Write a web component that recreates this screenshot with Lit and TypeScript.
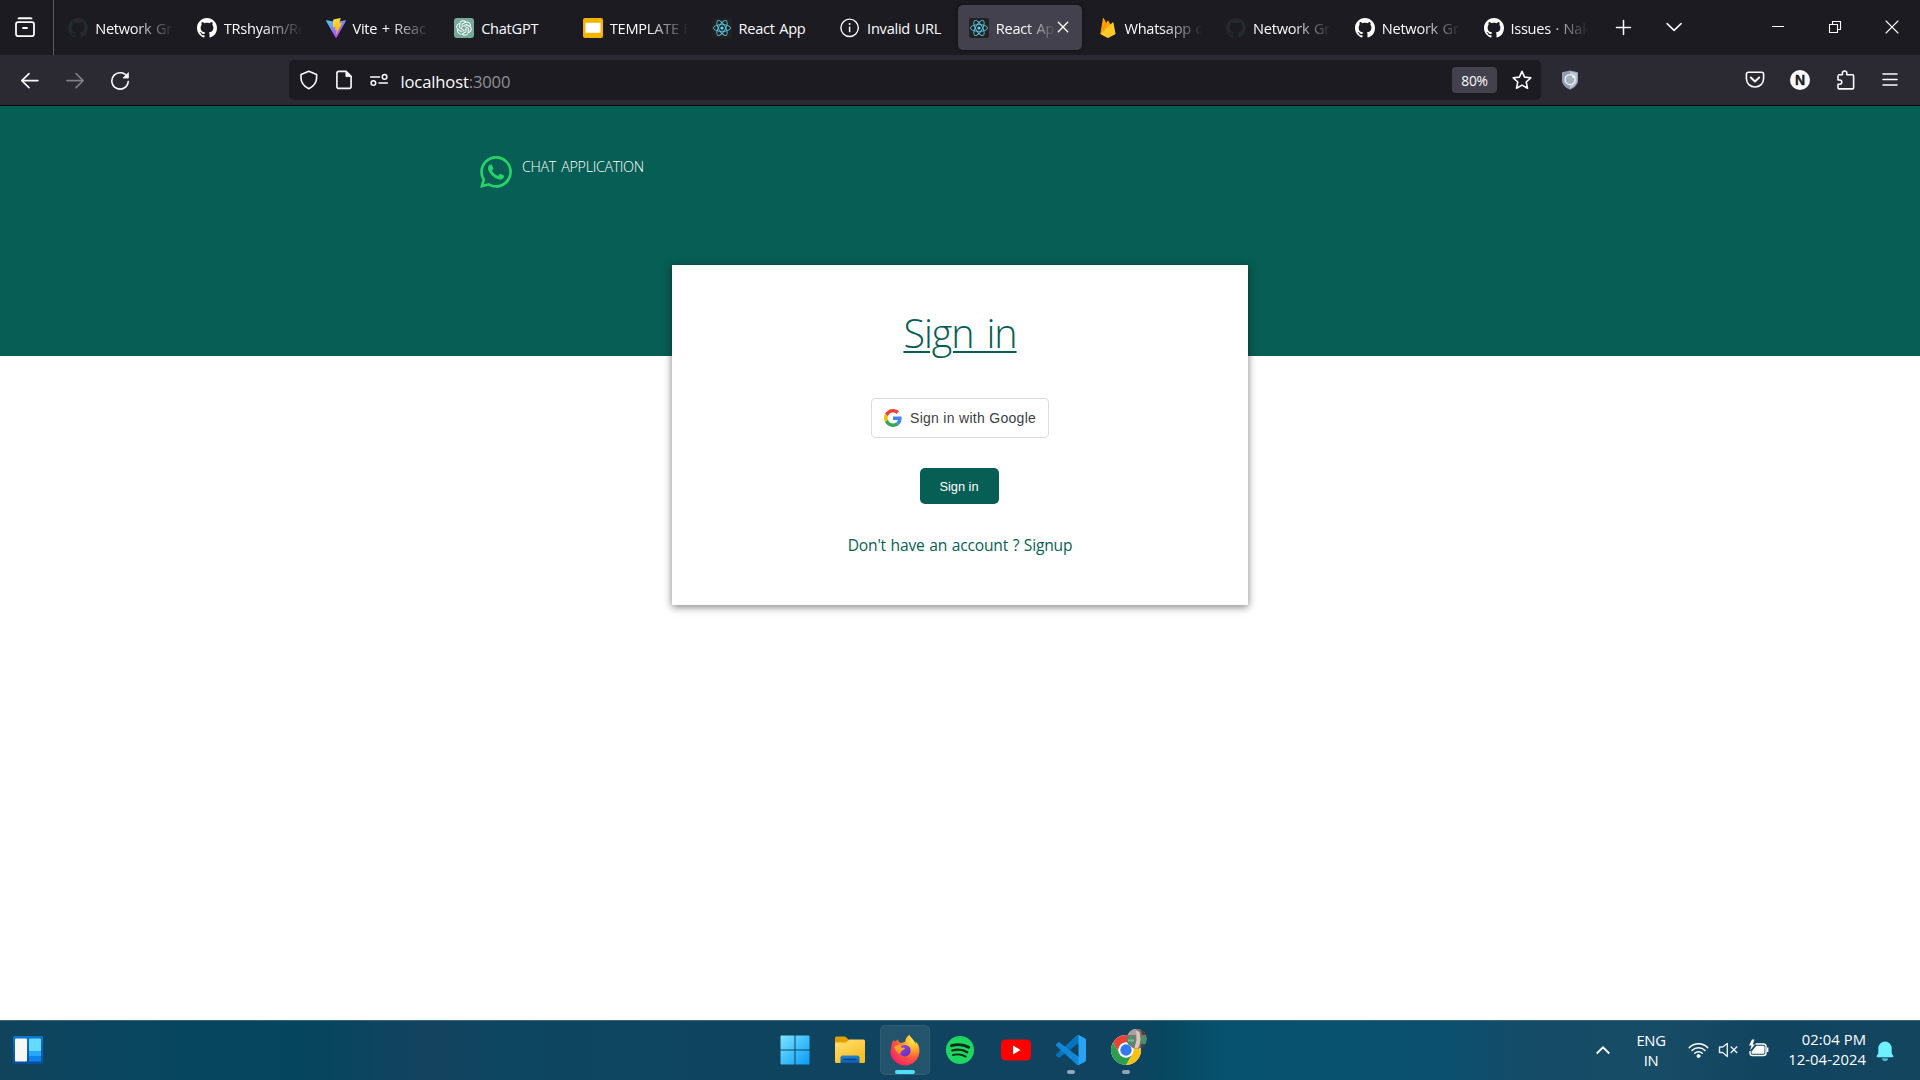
import { LitElement, html, css, svg, nothing } from "lit";
import { customElement } from "lit/decorators.js";
import { classMap } from "lit/directives/class-map.js";

const github = (color: string) => html`<svg class="fav" viewBox="0 0 16 16"><path fill=${color} d="M8 0C3.58 0 0 3.58 0 8c0 3.54 2.29 6.53 5.47 7.59.4.07.55-.17.55-.38 0-.19-.01-.82-.01-1.49-2.01.37-2.53-.49-2.69-.94-.09-.23-.48-.94-.82-1.13-.28-.15-.68-.52-.01-.53.63-.01 1.08.58 1.23.82.72 1.21 1.87.87 2.33.66.07-.52.28-.87.51-1.07-1.78-.2-3.64-.89-3.64-3.95 0-.87.31-1.59.82-2.15-.08-.2-.36-1.02.08-2.12 0 0 .67-.21 2.2.82.64-.18 1.32-.27 2-.27s1.36.09 2 .27c1.53-1.04 2.2-.82 2.2-.82.44 1.1.16 1.92.08 2.12.51.56.82 1.27.82 2.15 0 3.07-1.87 3.75-3.65 3.95.29.25.54.73.54 1.48 0 1.07-.01 1.93-.01 2.2 0 .21.15.46.55.38A8.01 8.01 0 0 0 16 8c0-4.42-3.58-8-8-8z"/></svg>`;

const vite = html`<svg class="fav" viewBox="0 0 32 32">
  <defs>
    <linearGradient id="va" x1="0" y1="0" x2="0.6" y2="1"><stop offset="0" stop-color="#41d1ff"/><stop offset="1" stop-color="#bd34fe"/></linearGradient>
    <linearGradient id="vb" x1="0.4" y1="0" x2="0.6" y2="1"><stop offset="0" stop-color="#ffea83"/><stop offset=".1" stop-color="#ffdd35"/><stop offset="1" stop-color="#ffa800"/></linearGradient>
  </defs>
  <path fill="url(#va)" d="M31.8 4.9 16.9 31.5c-.3.6-1.2.6-1.5 0L.2 4.9c-.3-.6.2-1.4.9-1.2L16 6.3l14.9-2.6c.7-.2 1.2.6.9 1.2z"/>
  <path fill="url(#vb)" d="M23 0 12 2.2c-.2 0-.4.2-.4.4l-.7 11.5c0 .3.3.5.5.5l3.1-.8c.3 0 .6.2.5.5l-.9 4.5c0 .3.2.6.5.5l1.9-.6c.3 0 .6.2.5.5l-1.5 7.1c0 .5.5.7.8.3l9.2-18.4c.2-.3-.1-.7-.4-.6l-3.2.6c-.3 0-.6-.2-.5-.5l2.1-7.2c0-.3-.2-.6-.5-.5z"/>
</svg>`;

const chatgpt = html`<svg class="fav" viewBox="0 0 20 20">
  <rect width="20" height="20" rx="3" fill="#74aa9c"/>
  <g transform="translate(2.2 2.2) scale(.65)"><path fill="#fff" d="M22.28 9.82a5.98 5.98 0 0 0-.51-4.91 6.05 6.05 0 0 0-6.51-2.9A6.07 6.07 0 0 0 4.98 4.18a5.98 5.98 0 0 0-4 2.9 6.05 6.05 0 0 0 .75 7.1 5.98 5.98 0 0 0 .51 4.91 6.05 6.05 0 0 0 6.51 2.9A5.98 5.98 0 0 0 13.26 24a6.06 6.06 0 0 0 5.77-4.21 5.99 5.99 0 0 0 4-2.9 6.06 6.06 0 0 0-.75-7.07zm-9.02 12.61a4.48 4.48 0 0 1-2.88-1.04l.14-.08 4.78-2.76a.8.8 0 0 0 .39-.68v-6.74l2.02 1.17a.07.07 0 0 1 .04.05v5.58a4.5 4.5 0 0 1-4.49 4.5zM3.6 18.3a4.47 4.47 0 0 1-.53-3.01l.14.09 4.78 2.76a.77.77 0 0 0 .78 0l5.84-3.37v2.33a.08.08 0 0 1-.03.06L9.74 19.95A4.5 4.5 0 0 1 3.6 18.3zM2.34 7.9a4.49 4.49 0 0 1 2.37-1.97v5.68a.77.77 0 0 0 .39.68l5.81 3.35-2.02 1.17a.08.08 0 0 1-.07 0l-4.83-2.79A4.5 4.5 0 0 1 2.34 7.87zm16.6 3.86-5.84-3.39 2.02-1.16a.08.08 0 0 1 .07 0l4.83 2.79a4.49 4.49 0 0 1-.68 8.1v-5.68a.79.79 0 0 0-.4-.66zm2.01-3.02-.14-.09-4.77-2.78a.78.78 0 0 0-.79 0L9.41 9.23V6.9a.07.07 0 0 1 .03-.06l4.83-2.79a4.5 4.5 0 0 1 6.68 4.66zM8.31 12.86l-2.02-1.16a.08.08 0 0 1-.04-.06V6.07a4.5 4.5 0 0 1 7.38-3.45l-.14.08-4.78 2.76a.8.8 0 0 0-.39.68zm1.1-2.37 2.6-1.5 2.61 1.5v3l-2.6 1.5-2.61-1.5z"/></g>
</svg>`;

const slides = html`<svg class="fav" viewBox="0 0 20 20"><rect width="20" height="20" rx="2" fill="#f5b400"/><rect x="2.5" y="4.8" width="15" height="10" fill="#fff"/></svg>`;

const react = html`<svg class="fav" viewBox="0 0 20 20"><rect width="20" height="20" rx="2" fill="#222"/>
  <g fill="none" stroke="#58c4e0" stroke-width=".9"><ellipse cx="10" cy="10" rx="8.6" ry="3.4"/><ellipse cx="10" cy="10" rx="8.6" ry="3.4" transform="rotate(60 10 10)"/><ellipse cx="10" cy="10" rx="8.6" ry="3.4" transform="rotate(120 10 10)"/></g><circle cx="10" cy="10" r="1.6" fill="#61dafb"/></svg>`;

const info = html`<svg class="fav" viewBox="0 0 20 20"><circle cx="9.6" cy="9.8" r="8.7" fill="none" stroke="#fbfbfe" stroke-width="1.4"/><path d="M9.6 8.6v5.6" stroke="#fbfbfe" stroke-width="1.5"/><circle cx="9.6" cy="5.9" r="1" fill="#fbfbfe"/></svg>`;

const firebase = html`<svg class="fav" viewBox="0 0 20 20"><path fill="#ffa000" d="M2.3 16 4.9.4c.1-.5.7-.5.9-.1l2.7 5L2.3 16z"/><path fill="#f57c00" d="m11 9.7-2.5-4.8L2.3 16 11 9.7z"/><path fill="#ffa000" d="m8.2 5.2 1.3-2.4c.2-.4.7-.4.9 0L16 13 2.3 16z"/><path fill="#ffca28" d="M17.6 16 15.4 4.6c0-.4-.5-.5-.8-.2L2.3 16l6.9 3.8c.4.2 1 .2 1.4 0l7-3.8z"/></svg>`;

const TABS = [
  { icon: github("#24292e"), title: "Network Gr", fade: true },
  { icon: github("#ffffff"), title: "TRshyam/Re", fade: true },
  { icon: vite, title: "Vite + Reac", fade: true },
  { icon: chatgpt, title: "ChatGPT", fade: false },
  { icon: slides, title: "TEMPLATE F", fade: true },
  { icon: react, title: "React App", fade: false },
  { icon: info, title: "Invalid URL", fade: false },
  { icon: react, title: "React Ap", fade: true, active: true },
  { icon: firebase, title: "Whatsapp c", fade: true },
  { icon: github("#24292e"), title: "Network Gr", fade: true },
  { icon: github("#ffffff"), title: "Network Gr", fade: true },
  { icon: github("#ffffff"), title: "Issues · Nak", fade: true },
];

/* 20px stroke icon used across the browser chrome */
const line = (body: unknown, width = 1.6) =>
  html`<svg class="ico" viewBox="0 0 20 20" fill="none" stroke="#fbfbfe" stroke-width=${width} stroke-linecap="round" stroke-linejoin="round">${body}</svg>`;

@customElement("browser-chrome")
export class BrowserChrome extends LitElement {
  static styles = css`
    :host { display: block; font-family: "Open Sans", "Noto Sans", sans-serif; color: #fbfbfe; }
    svg { display: block; flex: none; }
    .strip { display: flex; height: 55px; background: #1c1b22; }
    .view { box-sizing: border-box; padding: 17px 0 0 15px; border-right: 1px solid #5b5a61; width: 54px; }
    .ico, .fav { width: 20px; height: 20px; }
    .tabs { display: flex; padding-left: 1px; width: 1544px; }
    .tab { width: 128.67px; flex: none; box-sizing: border-box; padding: 5px 2.7px; }
    .inner { display: flex; height: 45px; box-sizing: border-box; padding: 13px 0 0 10.8px; border-radius: 5px; gap: 6.7px; }
    .active .inner { background: #42414d; box-shadow: 0 0 4px rgba(0,0,0,.45); }
    .label { width: 80px; height: 20px; line-height: 20px; white-space: nowrap; font-size: 14.6px; letter-spacing: -.26px; word-spacing: 1px; }
    .fade .label { -webkit-mask-image: linear-gradient(90deg, #000 48%, transparent 98%); mask-image: linear-gradient(90deg, #000 48%, transparent 98%); }
    .active .label { width: 61px; }
    .close { width: 12px; height: 12px; margin: 3px 0 0 -6px; }
    .after { display: flex; padding: 17px 0 0 15px; gap: 30px; }
    .win { display: flex; margin-left: auto; padding: 17px 18.5px 0 0; gap: 36.8px; }
    .nav { display: flex; align-items: flex-start; height: 50px; background: #2b2a33; box-sizing: border-box; padding-top: 5px; }
    .back { display: flex; padding: 11px 0 0 20px; gap: 25px; width: 269px; }
    .dim { opacity: .4; }
    .url { display: flex; align-items: flex-start; width: 1252px; height: 40px; border-radius: 5px; background: #1c1b22; box-sizing: border-box; padding: 10px 9px 0 10px; }
    .url .ico { margin-right: 15px; }
    .host { font-size: 16.6px; line-height: 24px; letter-spacing: -.15px; white-space: nowrap; margin-left: -3.5px; }
    .host span { color: #8f8e96; }
    .zoom { margin: -3px 15px 0 auto; width: 45px; height: 26px; line-height: 27px; border-radius: 4px; background: #42414d; text-align: center; font-size: 13.8px; letter-spacing: -.2px; }
    .url .star .ico { margin: 0; }
    .ext { padding: 10px 0 0 19px; }
    .right { display: flex; margin-left: auto; padding: 10px 20px 0 0; gap: 25px; }
    .edge { height: 1px; background: #0c0c0d; }
  `;
  render() {
    return html`
      <div class="strip">
        <div class="view">${line(svg`<path d="M3.5 1.4h13M4.5 1.2h11"/><rect x="1" y="5.2" width="18" height="14" rx="2.2"/><path d="M8 11h4"/>`, 1.8)}</div>
        <div class="tabs">
          ${TABS.map((t) => html`<div class=${classMap({ tab: true, fade: t.fade, active: !!t.active })}>
            <div class="inner">${t.icon}<div class="label">${t.title}</div>
              ${t.active ? html`<svg class="close" viewBox="0 0 12 12"><path d="M1.3 1.3l9.4 9.4M10.7 1.3l-9.4 9.4" stroke="#fbfbfe" stroke-width="1.4" stroke-linecap="round"/></svg>` : nothing}
            </div></div>`)}
        </div>
        <div class="after">
          ${line(svg`<path d="M9.5 3.6v14M2.5 10.6h14"/>`, 1.5)}
          ${line(svg`<path d="M3.1 6.6l7 6.8 7-6.8"/>`, 1.5)}
        </div>
        <div class="win">
          ${line(svg`<path d="M4 9.5h12" stroke-linecap="butt"/>`, 1)}
          ${line(svg`<path d="M4.5 7.5h8v8h-8zM7.500 7V4.500h8v8H13" stroke-linejoin="miter"/>`, 1.1)}
          ${line(svg`<path d="M4 4l12 12M16 4L4 16"/>`, 1.1)}
        </div>
      </div>
      <div class="nav">
        <div class="back">
          ${line(svg`<path d="M18 9.6H1.8M9 2.6L1.800 9.600l7.200 7"/>`)}
          <div class="dim">${line(svg`<path d="M2 9.6h16.2M11 2.600l7.200 7-7.200 7"/>`)}</div>
          ${line(svg`<path d="M17.4 6.3A8.2 8.2 0 1 0 18.2 10.6"/><path d="M18.4 2v5h-5z" fill="#fbfbfe" stroke-width=".8"/>`)}
        </div>
        <div class="url">
          ${line(svg`<path d="M9.8 1.2l7.8 3.3v3.3c0 4.6-2.6 8.4-7.8 11-5.2-2.6-7.8-6.4-7.8-11V4.5z"/>`)}
          ${line(svg`<path d="M4.9 1.4h7.200l5 5v10a2 2 0 0 1-2 2H4.900a2 2 0 0 1-2-2v-13a2 2 0 0 1 2-2z"/><path d="M11.900 1.600v5h5z" fill="#fbfbfe" stroke-width=".8"/>`)}
          ${line(svg`<path d="M1.600 7h9M10 13h8.400"/><circle cx="15.600" cy="6.900" r="2.300"/><circle cx="4.400" cy="13" r="2.300"/>`, 1.5)}
          <div class="host">localhost<span>:3000</span></div>
          <div class="zoom">80%</div>
          <div class="star">${line(svg`<path d="M10 1.4l2.6 5.7 6.2.7-4.6 4.2 1.3 6.2-5.5-3.1-5.5 3.1 1.3-6.2L1.2 7.8l6.2-.7z"/>`)}</div>
        </div>
        <div class="ext"><svg class="ico" viewBox="0 0 20 20"><path d="M10 .4l8 1.8v8.4c0 4-3.4 7-8 9.2-4.600-2.200-8-5.200-8-9.200V2.200z" fill="#8f9db5"/><path d="M10 1.600l6.800 1.500v7.400c0 3.400-2.800 6-6.800 8z" fill="#bcc6d6"/><circle cx="10" cy="9.600" r="5" fill="#a4aebd" stroke="#eef1f6" stroke-width="1.300"/><path d="M12.500 7.500l2-1.500" stroke="#fff" stroke-width="1.600"/></svg></div>
        <div class="right">
          ${line(svg`<path d="M3.300 2.300h13.400a1.900 1.900 0 0 1 1.900 1.900v4.300c0 5-3.800 8.500-8.600 8.500S1.400 13.500 1.400 8.500V4.200a1.900 1.900 0 0 1 1.900-1.900z"/><path d="M5.800 7.500l4.200 4 4.200-4" stroke-width="1.900"/>`)}
          <svg class="ico" viewBox="0 0 20 20"><circle cx="10" cy="10" r="10" fill="#fbfbfe"/><text x="10" y="15" text-anchor="middle" font-family="Liberation Sans, sans-serif" font-weight="700" font-size="14" fill="#1c1b22" stroke="#1c1b22" stroke-width=".4">N</text></svg>
          ${line(svg`<path d="M3.700 4.700h3.700V3.200a2.200 2.200 0 0 1 4.400 0v1.500h5.800a1 1 0 0 1 1 1v12.200a1 1 0 0 1-1 1H4.200a1.200 1.200 0 0 1-1.200-1.200v-3.500h1.700a2.100 2.100 0 0 0 0-4.200H3V5.700"/>`)}
          ${line(svg`<path d="M3 4h14M3 9.500h14M3 15h14"/>`, 1.5)}
        </div>
      </div>
      <div class="edge"></div>`;
  }
}

@customElement("sign-in-page")
export class SignInPage extends LitElement {
  static styles = css`
    :host { display: block; height: 914px; background: #fff; overflow: hidden; font-family: "Open Sans", "Noto Sans", sans-serif; }
    .header { height: 250px; box-sizing: border-box; background: #075e54; padding: 49px 0 0 480px; display: flex; gap: 10px; }
    .logo { width: 32px; height: 32px; margin-top: 1px; }
    .brand { font-size: 14.400px; line-height: 22px; margin-top: 1px; font-weight: 300; color: #fff; letter-spacing: -.38px; word-spacing: 2px; white-space: nowrap; }
    .card { position: relative; margin: -91px auto 0; width: 576px; height: 340px; box-sizing: border-box; background: #fff; box-shadow: 0 2px 8px rgba(0,0,0,.5); display: flex; flex-direction: column; align-items: center; padding-top: 41px; color: #075e54; }
    h1 { margin: 0; height: 55px; line-height: 55px; font-size: 39.500px; font-weight: 300; letter-spacing: -1.100px; word-spacing: 4px; text-decoration: underline; text-decoration-thickness: 2px; text-underline-offset: 3px; white-space: nowrap; }
    .google { margin-top: 37px; width: 178px; height: 40px; box-sizing: border-box; border: 1px solid #dadce0; border-radius: 4px; display: flex; align-items: center; padding-left: 12px; gap: 8px; font: 14px "Liberation Sans", Arial, sans-serif; letter-spacing: .29px; color: #3c4043; white-space: nowrap; }
    .google svg { width: 18px; height: 18px; flex: none; }
    .go { margin: 30px 2px 0 0; width: 79px; height: 36px; border: 0; border-radius: 5px; padding: 0; background: #075e54; color: #fff; font: 12.800px "Liberation Sans", Arial, sans-serif; }
    .sign { margin: 29px 0 0; font-size: 15.600px; line-height: 24px; letter-spacing: -.2px; word-spacing: .8px; white-space: nowrap; }
  `;
  render() {
    return html`
      <div class="header">
        <svg class="logo" viewBox="0 0 24 24"><path fill="#25d366" d="M17.472 14.382c-.297-.149-1.758-.867-2.030-.967-.273-.099-.471-.148-.670.150-.197.297-.767.966-.940 1.164-.173.199-.347.223-.644.075-.297-.150-1.255-.463-2.390-1.475-.883-.788-1.480-1.761-1.653-2.059-.173-.297-.018-.458.130-.606.134-.133.298-.347.446-.520.149-.174.198-.298.298-.497.099-.198.050-.371-.025-.520-.075-.149-.669-1.612-.916-2.207-.242-.579-.487-.500-.669-.510-.173-.008-.371-.010-.570-.010-.198 0-.520.074-.792.372-.272.297-1.040 1.016-1.040 2.479 0 1.462 1.065 2.875 1.213 3.074.149.198 2.096 3.200 5.077 4.487.709.306 1.262.489 1.694.625.712.227 1.360.195 1.871.118.571-.085 1.758-.719 2.006-1.413.248-.694.248-1.289.173-1.413-.074-.124-.272-.198-.570-.347m-5.421 7.403h-.004a9.870 9.870 0 0 1-5.031-1.378l-.361-.214-3.741.982.998-3.648-.235-.374a9.860 9.860 0 0 1-1.510-5.260c.001-5.450 4.436-9.884 9.888-9.884 2.640 0 5.122 1.030 6.988 2.898a9.825 9.825 0 0 1 2.893 6.994c-.003 5.450-4.437 9.884-9.885 9.884m8.413-18.297A11.815 11.815 0 0 0 12.050 0C5.495 0 .160 5.335.157 11.892c0 2.096.547 4.142 1.588 5.945L.057 24l6.305-1.654a11.882 11.882 0 0 0 5.683 1.448h.005c6.554 0 11.890-5.335 11.893-11.893a11.821 11.821 0 0 0-3.480-8.413z"/></svg>
        <div class="brand">CHAT APPLICATION</div>
      </div>
      <div class="card">
        <h1>Sign in</h1>
        <div class="google">
          <svg viewBox="0 0 48 48"><path fill="#EA4335" d="M24 9.500c3.540 0 6.710 1.220 9.210 3.600l6.850-6.850C35.900 2.380 30.470 0 24 0 14.620 0 6.510 5.380 2.560 13.220l7.980 6.190C12.430 13.720 17.740 9.500 24 9.500z"/><path fill="#4285F4" d="M46.980 24.550c0-1.570-.150-3.090-.380-4.550H24v9.020h12.940c-.580 2.960-2.260 5.480-4.780 7.180l7.730 6c4.510-4.180 7.090-10.360 7.090-17.650z"/><path fill="#FBBC05" d="M10.530 28.590c-.480-1.450-.760-2.990-.760-4.590s.270-3.140.760-4.590l-7.980-6.190C.920 16.460 0 20.120 0 24c0 3.880.920 7.540 2.560 10.780l7.970-6.190z"/><path fill="#34A853" d="M24 48c6.480 0 11.930-2.130 15.890-5.810l-7.730-6c-2.150 1.450-4.920 2.300-8.160 2.300-6.260 0-11.570-4.220-13.470-9.910l-7.980 6.190C6.510 42.620 14.620 48 24 48z"/></svg>
          <span>Sign in with Google</span>
        </div>
        <button class="go">Sign in</button>
        <p class="sign">Don't have an account ? Signup</p>
      </div>`;
  }
}

@customElement("task-bar")
export class TaskBar extends LitElement {
  static styles = css`
    :host { display: block; font-family: "Open Sans", "Noto Sans", sans-serif; color: #fff; }
    .bar { display: grid; grid-template-columns: 1fr auto 1fr; height: 60px; box-sizing: border-box; border-top: 1px solid #3c6377; background: linear-gradient(90deg, #11435c 0, #0b4660 90px, #06465f 210px, #07455f 330px, #14435f 430px, #0d4660 500px, #0f445f 780px, #10435f 1120px, #08475f 1165px, #07526f 1220px, #08516f 1350px, #0b506f 1440px, #154b66 1540px, #174c66 1660px, #11445f 1760px, #13455f 1920px); }
    svg { display: block; }
    .widgets { padding: 15px 0 0 13px; }
    .apps { display: flex; gap: 5.300px; padding: 4px 0 0; margin-left: .8px; }
    .app { width: 50px; height: 50px; box-sizing: border-box; padding-top: 9px; border-radius: 5px; display: flex; flex-direction: column; align-items: center; gap: 4px; }
    .app svg { width: 32px; height: 32px; overflow: visible; flex: none; }
    .app.on { background: rgba(255,255,255,.09); box-shadow: inset 0 0 0 1px rgba(255,255,255,.06); }
    .mark { width: 8px; height: 4px; border-radius: 2px; background: #8fa6b3; flex: none; }
    .on .mark { width: 20px; background: #4ce0ff; }
    .tray { display: flex; justify-content: flex-end; padding-right: 25px; font-size: 14.800px; line-height: 20px; }
    .up { width: 16px; height: 16px; margin: 21px 24px 0 0; }
    .lang { width: 32px; text-align: center; padding-top: 9px; margin-right: 21px; letter-spacing: -.3px; }
    .quick { display: flex; gap: 9px; padding-top: 18px; margin-right: 18px; }
    .quick svg { width: 21px; height: 21px; }
    .clock { padding-top: 8px; width: 79px; white-space: nowrap; letter-spacing: .05px; margin-right: 9px; display: flex; flex-direction: column; align-items: flex-end; }
    .bell { width: 20px; height: 22px; margin-top: 19px; }
  `;
  render() {
    return html`<div class="bar">
      <div class="widgets"><svg width="30" height="28" viewBox="0 0 30 28"><defs><linearGradient id="w" x2="0" y2="1"><stop stop-color="#0a78cf"/><stop offset="1" stop-color="#0b4da0"/></linearGradient></defs><rect width="30" height="28" rx="1.500" fill="url(#w)"/><rect x="2" y="2.500" width="12" height="23" rx="1" fill="#f7f7f7"/><rect x="16" y="2.500" width="12" height="13" rx="1" fill="#66d9ff"/><rect x="16" y="15.500" width="12" height="5" fill="#27a8fc"/><rect x="16" y="20.500" width="12" height="5" rx="1" fill="#0a85f0"/></svg></div>
      <div class="apps">
        <div class="app"><svg viewBox="0 0 32 32"><defs><linearGradient id="win" gradientUnits="userSpaceOnUse" x1="2" y1="2" x2="30" y2="30"><stop stop-color="#7fe2ff"/><stop offset=".5" stop-color="#3fc0fb"/><stop offset="1" stop-color="#0a9cf8"/></linearGradient></defs><path fill="url(#win)" d="M1.500 2.500a1 1 0 0 1 1-1H15.500v14h-14zM16.500 1.500h13a1 1 0 0 1 1 1v13h-14zM1.500 16.500h14v14h-13a1 1 0 0 1-1-1zM16.500 16.500h14v13a1 1 0 0 1-1 1h-13z"/></svg></div>
        <div class="app"><svg viewBox="0 0 32 32"><defs><linearGradient id="fo" x2=".6" y2="1"><stop stop-color="#ffe07a"/><stop offset="1" stop-color="#fcbd1c"/></linearGradient><linearGradient id="fb" x2="0" y2="1"><stop stop-color="#2183d3"/><stop offset="1" stop-color="#0c5aa8"/></linearGradient></defs><path fill="#dfa000" d="M1 9V4a1.500 1.500 0 0 1 1.500-1.500H10c1 0 1.700.200 2.400.900L14.500 5.500H16V10H1z"/><path fill="url(#fo)" d="M1 8.500h10c1 0 1.500-.300 2.200-1l1.300-1.200c.500-.500 1-.800 1.800-.800H29.500A1.500 1.500 0 0 1 31 7v20.500a1.500 1.500 0 0 1-1.500 1.500h-27A1.500 1.500 0 0 1 1 27.500z"/><path fill="url(#fb)" d="M6.500 29v-5.500a2 2 0 0 1 2-2h15a2 2 0 0 1 2 2V29z"/><path stroke="#093f7c" stroke-width="1.200" stroke-linecap="round" d="M10 25.300h12"/></svg></div>
        <div class="app on"><svg viewBox="0 0 32 32"><defs><radialGradient id="ff" cx=".8" cy=".15" r="1"><stop stop-color="#fff44f"/><stop offset=".3" stop-color="#ffb02e"/><stop offset=".6" stop-color="#ff5a3c"/><stop offset="1" stop-color="#f01c6b"/></radialGradient><linearGradient id="fp" x2="1" y2="1"><stop stop-color="#a04ae8"/><stop offset="1" stop-color="#5a2bb8"/></linearGradient></defs><path fill="url(#ff)" d="M29.500 11.500c-.600-1.500-1.900-3.200-2.900-3.700.200 1 .400 1.800.3 2.200-1.700-4-4.400-5.700-6.700-9.300C18 2.300 16.300 5 16.100 8c-1.200.100-2.400.400-3.400 1-1-.100-2.500-.600-2.800-1.200-.900-1.200-.800-2.600-.8-2.600-1 .400-1.800 1.300-2.500 2.300-1.200-.500-2-1.500-2-1.500C2.800 8.500 2 12 2.200 14.200c-.900 1.900-1 4.100-.500 6.300A14.600 14.600 0 0 0 30.400 18c.200-2.500-.200-5-.9-6.500z"/><circle cx="15.800" cy="16.700" r="5.800" fill="url(#fp)"/><path fill="#ff9f2a" d="M5.200 13c2-1.700 4.600-2.300 7.300-1.700-.700.700-.7 1.500-.300 2.300 1.500.300 3 .1 3.700.5.200 1.500-2.400 2.100-3.400 3-.700 1-.500 2-1.600 2.500-2.500-.500-4.900-3.500-5.700-6.600z"/></svg><div class="mark"></div></div>
        <div class="app"><svg viewBox="0 0 32 32"><circle cx="16" cy="16" r="14" fill="#1ed760"/><g fill="none" stroke="#11281c" stroke-linecap="round"><path stroke-width="2.800" d="M7.400 11.700c5.500-1.600 12.500-1.200 17.300 1.600"/><path stroke-width="2.300" d="M8.300 16.500c5-1.400 10.700-.800 15 1.700"/><path stroke-width="1.900" d="M9 21c4.300-1.200 8.800-.700 12.700 1.600"/></g></svg></div>
        <div class="app"><svg viewBox="0 0 32 32"><rect x="1" y="5.500" width="30" height="21" rx="4.500" fill="#f00"/><path fill="#fff" d="M13 11.500v9l7.500-4.500z"/></svg></div>
        <div class="app"><svg viewBox="0 0 32 32"><g transform="translate(1 1) scale(.3)">
          <path fill="#0873bd" d="M96.461 10.796 75.857.876C73.472-.273 70.622.212 68.750 2.083L1.299 63.583c-1.815 1.654-1.813 4.511.004 6.162l5.510 5.009c1.485 1.350 3.722 1.450 5.321.236L93.361 13.370C96.086 11.303 100 13.246 100 16.667v-.240c0-2.401-1.375-4.589-3.539-5.631z"/>
          <path fill="#1287d6" d="M96.461 89.204 75.857 99.125c-2.385 1.148-5.235.663-7.107-1.208L1.299 36.417c-1.815-1.654-1.813-4.511.004-6.162l5.510-5.009c1.485-1.350 3.722-1.450 5.321-.236L93.361 86.630C96.086 88.697 100 86.754 100 83.333v.240c0 2.401-1.375 4.589-3.539 5.631z"/>
          <path fill="#2ba3f3" d="M75.858 99.126c-2.386 1.148-5.236.662-7.108-1.210C71.056 100.223 75 98.590 75 95.328V4.672C75 1.410 71.056-.223 68.750 2.083c1.872-1.872 4.722-2.357 7.108-1.209l20.601 9.907C98.623 11.822 100 14.011 100 16.413v67.174c0 2.402-1.377 4.592-3.541 5.633z"/></g></svg><div class="mark"></div></div>
        <div class="app"><svg viewBox="0 0 32 32"><defs><clipPath id="av"><circle cx="26.700" cy="4.800" r="10"/></clipPath></defs><circle cx="16" cy="16" r="15" fill="#fff"/><path fill="#ea4335" d="M16 1a15 15 0 0 1 13 7.500H16A7.500 7.500 0 0 0 9.500 19.800L3 8.500A15 15 0 0 1 16 1z"/><path fill="#fbc116" d="M29 8.500A15 15 0 0 1 16 31l6.500-11.300A7.500 7.500 0 0 0 16 8.500z"/><path fill="#2f9e4c" d="M16 31A15 15 0 0 1 3 8.500l6.500 11.300A7.500 7.500 0 0 0 22.500 19.800z"/><circle cx="16" cy="16" r="7.500" fill="#fff"/><circle cx="16" cy="16" r="5.700" fill="#3079ee"/>
          <g clip-path="url(#av)"><path fill="#7d7673" d="M16-6h22v22H16z"/><path fill="#a9a19f" d="M18-5h8v6h-8z"/><path fill="#4a8f6c" d="M16 3h9v8h-9zM31 3h7v7h-7z"/><path fill="#7fb59c" d="M18 5.500h6v2h-6z"/><path fill="#513f3c" d="M30-6h8v7h-6zM31 10h6v6h-7z"/><path fill="#dcc7ba" d="M26-4l3.500 2 1 7-1 6-2 4-3-1 2-8z"/></g></svg><div class="mark"></div></div>
      </div>
      <div class="tray">
        <svg class="up" viewBox="0 0 16 16"><path d="M1.700 11.500 8 5.300l6.300 6.200" fill="none" stroke="#fff" stroke-width="1.800"/></svg>
        <div class="lang"><div>ENG</div><div>IN</div></div>
        <div class="quick">
          <svg viewBox="0 0 21 21" fill="none" stroke="#fff" stroke-width="1.500" stroke-linecap="round"><path d="M1.300 8.600a13 13 0 0 1 18.400 0M4 11.500a9.200 9.200 0 0 1 13 0M6.700 14.300a5.400 5.400 0 0 1 7.600 0"/><circle cx="10.500" cy="17" r="1.500" fill="#fff" stroke-width="1"/></svg>
          <svg viewBox="0 0 21 21" fill="none" stroke="#e4ecef" stroke-width="1.400" stroke-linejoin="round"><path d="M1.500 8v5.500h3.200l4.600 4V4.500L4.700 8zM12.700 7.500l6.500 6.500M19.200 7.500l-6.500 6.500"/></svg>
          <svg viewBox="0 0 21 21"><path d="M7.500 5h8A2.500 2.500 0 0 1 18 7.500V14a2.500 2.500 0 0 1-2.500 2.500h-11A2.500 2.500 0 0 1 2 14v-2" fill="none" stroke="#fff" stroke-width="1.400"/><path fill="#fff" d="M8.300 6.800H15.500a1 1 0 0 1 1 1v6a1 1 0 0 1-1 1H4.500a1 1 0 0 1-1-1v-1.300zM18.800 8.500h1.600v4.500h-1.600zM4 .5 1 6.500h2.500L2 11.500 7 5.500H4.700L6.500.5z"/></svg>
        </div>
        <div class="clock"><div>02:04 PM</div><div>12-04-2024</div></div>
        <svg class="bell" viewBox="0 0 20 22"><path fill="#6ff0ff" d="M10 1.500a6.700 6.700 0 0 0-6.700 6.700v5L1.700 16a.8.800 0 0 0 .7 1.200h15.200a.8.800 0 0 0 .7-1.200l-1.600-2.800v-5A6.700 6.700 0 0 0 10 1.500z"/><path fill="#45b8d0" d="M7 18.300h6a3 3 0 0 1-6 0z"/></svg>
      </div>
    </div>`;
  }
}

@customElement("app-root")
export class AppRoot extends LitElement {
  static styles = css`
    :host { display: block; width: 1920px; height: 1080px; overflow: hidden; }
  `;
  render() {
    return html`<browser-chrome></browser-chrome><sign-in-page></sign-in-page><task-bar></task-bar>`;
  }
}
